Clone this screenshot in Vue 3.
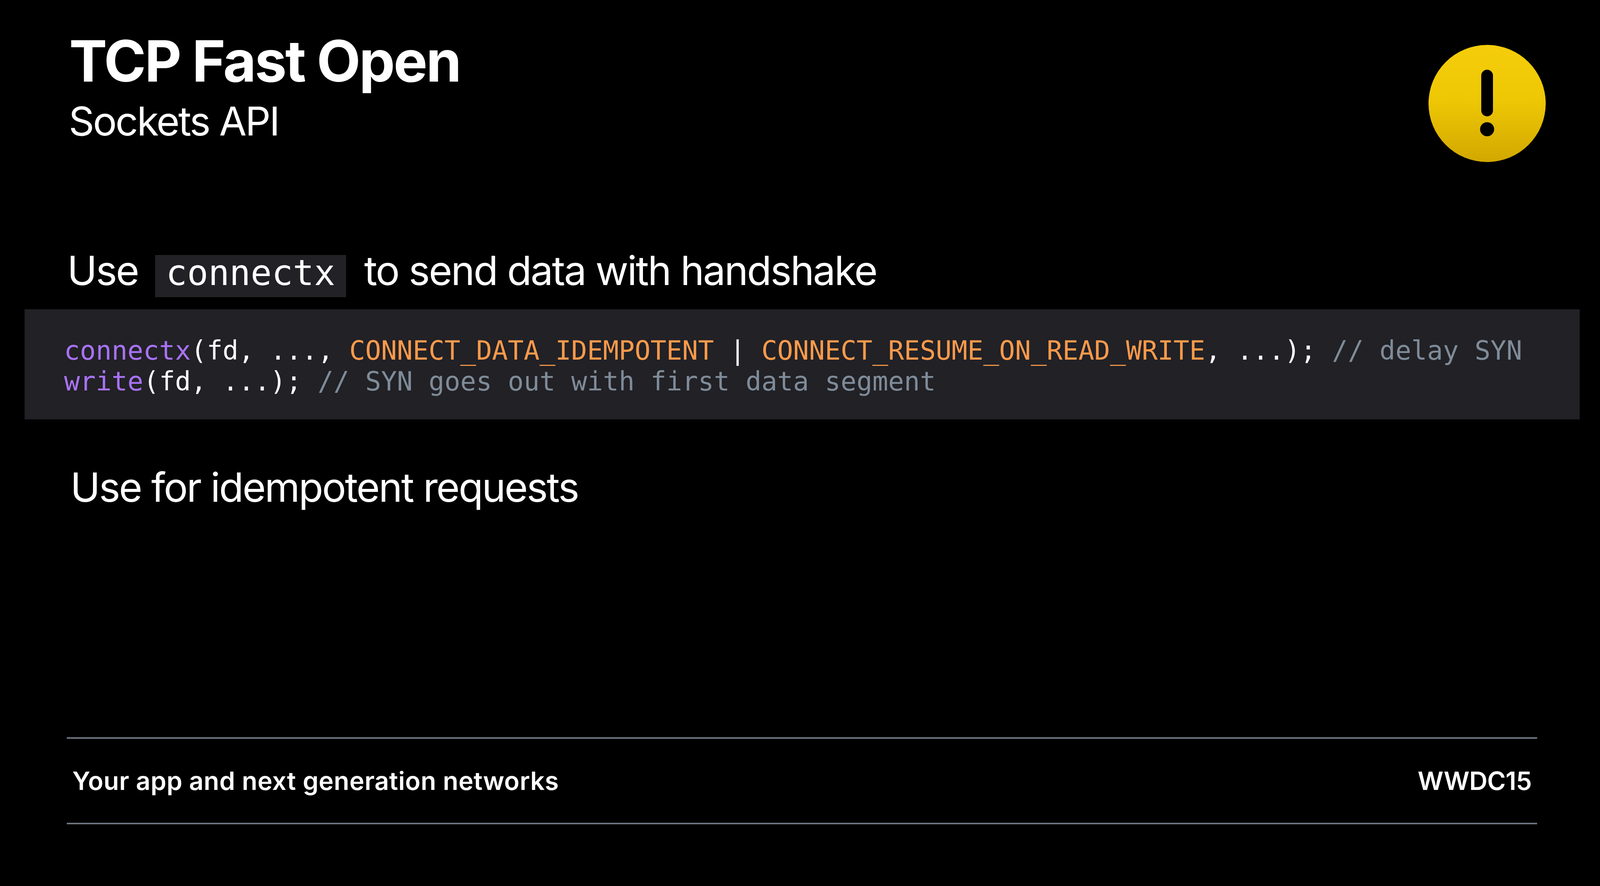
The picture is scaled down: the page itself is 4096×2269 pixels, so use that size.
<template>
  <div class="slide">
    <header class="head">
      <div class="titles">
        <h1 class="title">TCP Fast Open</h1>
        <h2 class="subtitle">Sockets API</h2>
      </div>
      <svg class="warn" viewBox="0 0 300 300" aria-hidden="true">
        <defs>
          <linearGradient id="warnFill" x1="0" y1="0" x2="0" y2="1">
            <stop offset="0" stop-color="#f5cd0a" />
            <stop offset="0.45" stop-color="#efc805" />
            <stop offset="1" stop-color="#d2a800" />
          </linearGradient>
        </defs>
        <circle cx="150" cy="150" r="150" fill="url(#warnFill)" />
        <rect x="135" y="63.5" width="30" height="119.5" rx="15" fill="#000" />
        <circle cx="150" cy="216" r="18" fill="#000" />
      </svg>
    </header>

    <p class="lead">
      <span class="word">Use</span>
      <code class="chip">connectx</code>
      <span class="word">to send data with handshake</span>
    </p>

    <pre class="code"><span class="fn">connectx</span>(fd, ..., <span class="const">CONNECT_DATA_IDEMPOTENT</span> | <span class="const">CONNECT_RESUME_ON_READ_WRITE</span>, ...); <span class="cm">// delay SYN</span>
<span class="fn">write</span>(fd, ...); <span class="cm">// SYN goes out with first data segment</span></pre>

    <p class="point">Use for idempotent requests</p>

    <footer class="foot">
      <span>Your app and next generation networks</span>
      <span class="event">WWDC15</span>
    </footer>
  </div>
</template>

<script setup>
</script>

<style>
html, body { margin: 0; background: #000; }
</style>

<style scoped>
.slide {
  box-sizing: border-box;
  width: 4096px;
  height: 2269px;
  background: #000;
  color: #fff;
  font-family: Inter, "Liberation Sans", sans-serif;
  display: flex;
  flex-direction: column;
  overflow: hidden;
}
.head {
  display: flex;
  justify-content: space-between;
  align-items: flex-start;
  height: 630px;
  padding: 84px 139px 0 177px;
  box-sizing: border-box;
}
.title {
  margin: 0;
  font-size: 146px;
  line-height: 144px;
  font-weight: 700;
  letter-spacing: -3.8px;
}
.subtitle {
  margin: 20px 0 0 -1px;
  font-size: 102px;
  line-height: 124px;
  font-weight: 400;
  letter-spacing: -3.5px;
}
.warn {
  width: 300px;
  height: 300px;
  margin-top: 30.5px;
}
.lead {
  margin: 23px 0 0 172px;
  height: 108px;
  display: flex;
  align-items: baseline;
  font-size: 103px;
  letter-spacing: -3.1px;
}
.word {
  line-height: 76px;
}
.chip {
  box-sizing: border-box;
  background: #212126;
  font-family: "DejaVu Sans Mono", "Liberation Mono", monospace;
  font-size: 90px;
  letter-spacing: 0;
  margin: 0 46px 0 43px;
  padding: 0 28px 16px;
  height: 108px;
  line-height: 92px;
}
.code {
  margin: 31px 52px 0 63px;
  padding: 67px 0 0 101px;
  height: 282px;
  box-sizing: border-box;
  background: #212126;
  font-family: "DejaVu Sans Mono", "Liberation Mono", monospace;
  font-size: 67.4px;
  line-height: 78.5px;
  white-space: pre;
}
.fn { color: #a972f5; }
.const { color: #fd9a4b; }
.cm { color: #7f8b98; }
.point {
  margin: 112px 0 0 180px;
  font-size: 103px;
  line-height: 124px;
  letter-spacing: -3.2px;
}
.foot {
  margin: 578px 161px 0 171px;
  height: 223px;
  border-top: 4.6px solid #6c7580;
  border-bottom: 4.6px solid #6c7580;
  box-sizing: border-box;
  display: flex;
  justify-content: space-between;
  align-items: center;
  padding: 0 14px 0 14px;
  font-size: 64.6px;
  font-weight: 600;
  letter-spacing: 0.5px;
}
.event {
  letter-spacing: -0.6px;
}
</style>
